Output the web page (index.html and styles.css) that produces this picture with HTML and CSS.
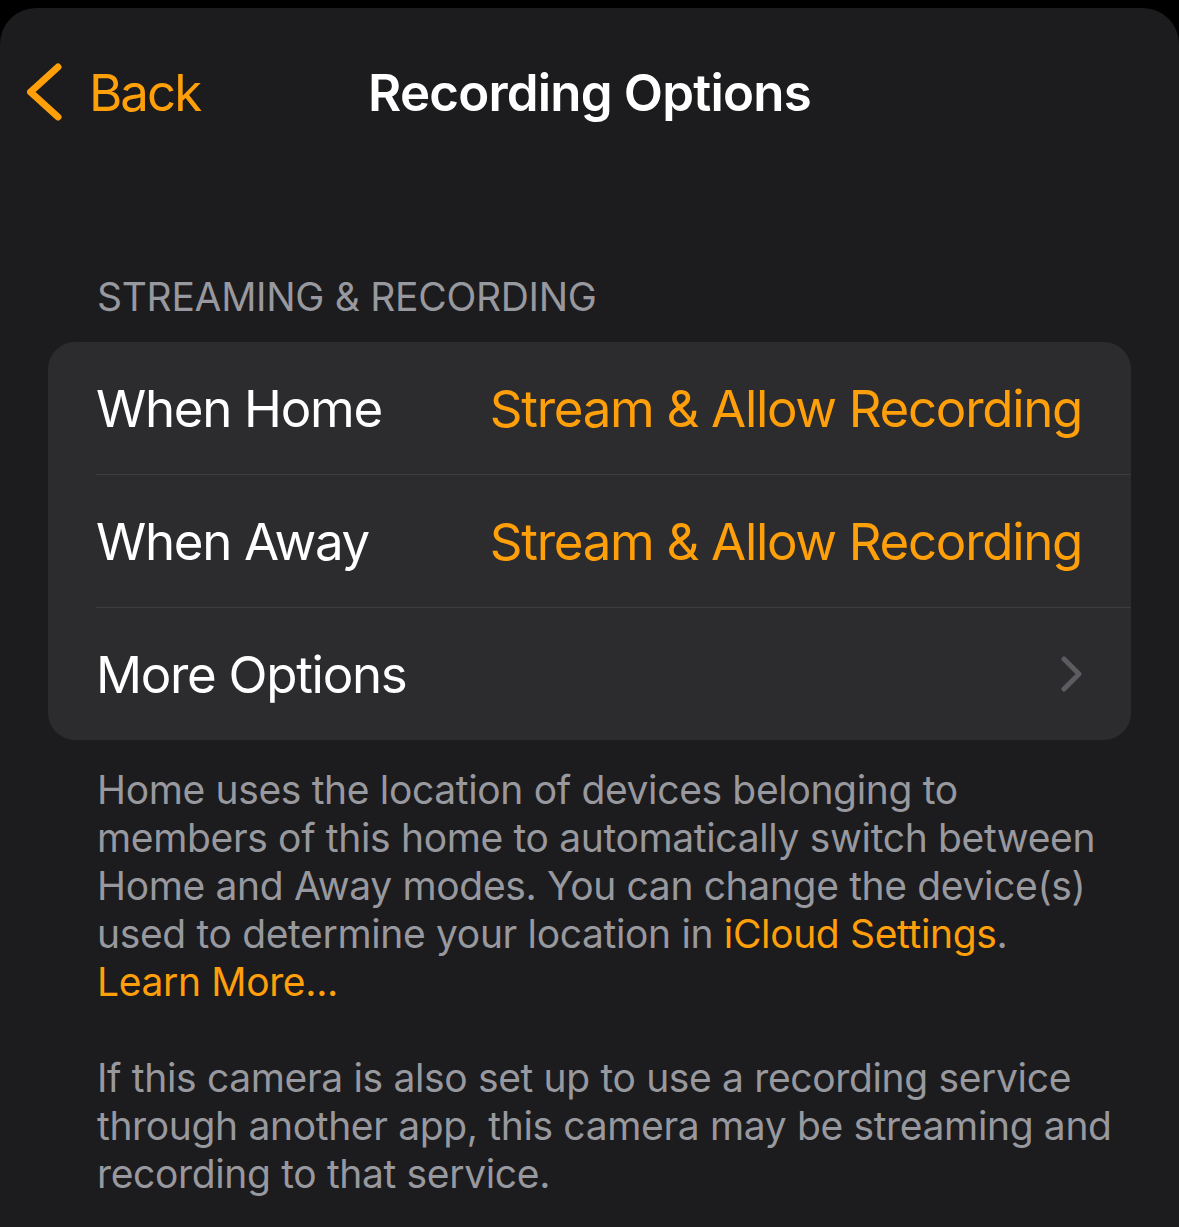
FILE: index.html
```html
<!DOCTYPE html>
<html lang="en">
<head>
<meta charset="utf-8">
<title>Recording Options</title>
<link rel="stylesheet" href="styles.css">
</head>
<body>
<div class="sheet">
  <header class="nav">
    <a class="back" href="#">
      <svg class="back-icon" width="40" height="64" viewBox="0 0 40 64" aria-hidden="true">
        <path d="M31 4 L3.5 29 L31 54" fill="none" stroke="#FF9F0A" stroke-width="7" stroke-linecap="round" stroke-linejoin="round"/>
      </svg>
      <span>Back</span>
    </a>
    <h1 class="title">Recording Options</h1>
    <span class="nav-spacer"></span>
  </header>

  <section class="group">
    <h2 class="group-header">STREAMING &amp; RECORDING</h2>
    <ul class="card">
      <li class="row">
        <span class="row-label">When Home</span>
        <span class="row-value">Stream &amp; Allow Recording</span>
      </li>
      <li class="row">
        <span class="row-label">When Away</span>
        <span class="row-value">Stream &amp; Allow Recording</span>
      </li>
      <li class="row">
        <span class="row-label">More Options</span>
        <svg class="chevron" width="24" height="36" viewBox="0 0 24 36" aria-hidden="true">
          <path d="M4 3 L19 18 L4 33" fill="none" stroke="#5B5B60" stroke-width="5" stroke-linecap="round" stroke-linejoin="round"/>
        </svg>
      </li>
    </ul>
    <div class="footer">
      <p><span class="line">Home uses the location of devices belonging to</span><br><span class="line">members of this home to automatically switch between</span><br><span class="line">Home and Away modes. You can change the device(s)</span><br><span class="line">used to determine your location in <a class="link" href="#">iCloud Settings</a>.</span><br><a class="link" href="#">Learn More...</a></p>
      <p><span class="line">If this camera is also set up to use a recording service</span><br><span class="line">through another app, this camera may be streaming and</span><br><span class="line">recording to that service.</span></p>
    </div>
  </section>
</div>
</body>
</html>
```

FILE: styles.css
```css
html, body {
  margin: 0;
  padding: 0;
  background: #000;
  height: 100%;
}

body {
  padding-top: 8px;
  box-sizing: border-box;
  font-family: Inter, "Noto Sans", "Liberation Sans", sans-serif;
  -webkit-font-smoothing: antialiased;
}

.sheet {
  background: #1c1c1e;
  border-radius: 36px 36px 0 0;
  min-height: 100%;
  box-sizing: border-box;
  overflow: hidden;
}

.nav {
  display: grid;
  grid-template-columns: 1fr auto 1fr;
  align-items: center;
  height: 265px;
  padding: 41px 0 138px;
  box-sizing: border-box;
}

.back {
  display: flex;
  align-items: center;
  gap: 22px;
  padding-left: 27px;
  color: #FF9F0A;
  text-decoration: none;
  font-size: 51px;
  letter-spacing: -2px;
}

.back-icon {
  display: block;
  margin-top: 6px;
}

.title {
  margin: 0;
  color: #fff;
  font-size: 51px;
  font-weight: 600;
  letter-spacing: -0.8px;
}

.group {
  padding: 0 48px;
}

.group-header {
  margin: 0;
  padding: 0 0 21px 49px;
  color: #98989f;
  font-size: 39px;
  font-weight: 400;
  line-height: 48px;
  letter-spacing: -0.3px;
}

.card {
  list-style: none;
  margin: 0;
  padding: 0;
  background: #2c2c2e;
  border-radius: 27px;
  overflow: hidden;
}

.row {
  display: flex;
  align-items: center;
  justify-content: space-between;
  height: 133px;
  margin-left: 48px;
  padding-right: 49px;
  box-sizing: border-box;
  border-top: 1px solid #3d3d41;
  font-size: 51px;
  letter-spacing: -1.3px;
}

.row:first-child {
  border-top: none;
  height: 132px;
}

.row-label {
  color: #fff;
}

.row-value {
  color: #FF9F0A;
}

.chevron {
  display: block;
  margin-right: -2px;
}

.footer {
  padding: 26px 0 0 49px;
  color: #98989f;
  font-size: 39px;
  line-height: 48px;
  letter-spacing: -0.35px;
}

.footer p {
  margin: 0 0 48px;
}

.line {
  white-space: nowrap;
}

.link {
  color: #FF9F0A;
  text-decoration: none;
}
```
